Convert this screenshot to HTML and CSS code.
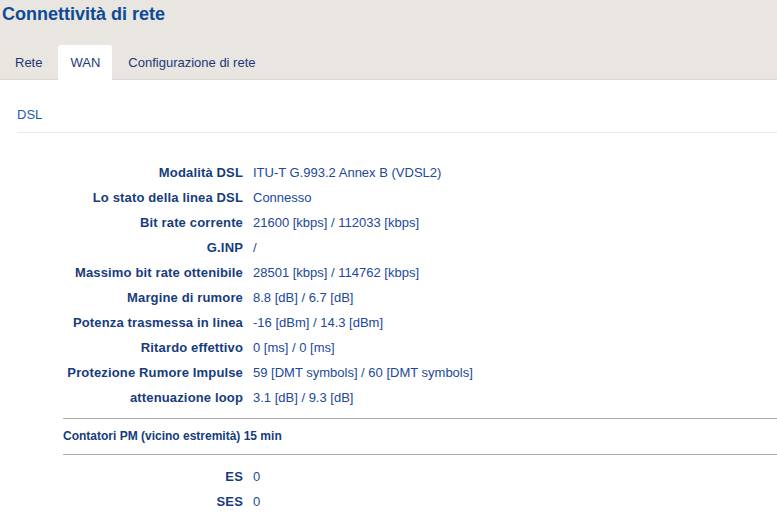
FILE: index.html
```html
<!DOCTYPE html>
<html lang="it">
<head>
    <meta charset="UTF-8">
    <title>Connettività di rete</title>
    <link rel="stylesheet" href="styles.css">
</head>
<body>
    <div class="header">
        <h1>Connettività di rete</h1>
        <div class="tabs">
            <div class="tab">Rete</div>
            <div class="tab active">WAN</div>
            <div class="tab">Configurazione di rete</div>
        </div>
    </div>

    <div class="content">
        <div class="section-title">DSL</div>

        <div class="rows">
            <div class="row"><span class="label">Modalità DSL</span><span class="value">ITU-T G.993.2 Annex B (VDSL2)</span></div>
            <div class="row"><span class="label">Lo stato della linea DSL</span><span class="value">Connesso</span></div>
            <div class="row"><span class="label">Bit rate corrente</span><span class="value">21600 [kbps] / 112033 [kbps]</span></div>
            <div class="row"><span class="label">G.INP</span><span class="value">/</span></div>
            <div class="row"><span class="label">Massimo bit rate ottenibile</span><span class="value">28501 [kbps] / 114762 [kbps]</span></div>
            <div class="row"><span class="label">Margine di rumore</span><span class="value">8.8 [dB] / 6.7 [dB]</span></div>
            <div class="row"><span class="label">Potenza trasmessa in linea</span><span class="value">-16 [dBm] / 14.3 [dBm]</span></div>
            <div class="row"><span class="label">Ritardo effettivo</span><span class="value">0 [ms] / 0 [ms]</span></div>
            <div class="row"><span class="label">Protezione Rumore Impulse</span><span class="value">59 [DMT symbols] / 60 [DMT symbols]</span></div>
            <div class="row"><span class="label">attenuazione loop</span><span class="value">3.1 [dB] / 9.3 [dB]</span></div>
        </div>

        <div class="subsection">Contatori PM (vicino estremità) 15 min</div>

        <div class="rows">
            <div class="row"><span class="label">ES</span><span class="value">0</span></div>
            <div class="row"><span class="label">SES</span><span class="value">0</span></div>
        </div>
    </div>
</body>
</html>
```

FILE: styles.css
```css
body {
    margin: 0;
    font-family: "Liberation Sans", Arial, sans-serif;
    font-size: 13px;
    background-color: #fff;
}

.header {
    background-color: #e9e5e1;
    border-bottom: 1px solid #dad6d2;
}

h1 {
    margin: 0;
    padding: 3px 0 0 2px;
    font-size: 18px;
    line-height: 22px;
    color: #0d4b95;
}

.tabs {
    display: flex;
    padding-left: 3px;
    margin-top: 20px;
}

.tab {
    padding: 1px 12px 0;
    height: 33px;
    line-height: 34px;
    color: #1d3877;
    margin-right: 4px;
}

.tab.active {
    background-color: #fff;
    border-radius: 3px 3px 0 0;
    margin-bottom: -1px;
    height: 34px;
}

.content {
    padding: 0 0 0 17px;
}

.section-title {
    color: #1b5ea6;
    height: 52px;
    line-height: 69px;
    border-bottom: 1px solid #ebebeb;
    margin-bottom: 27px;
}

.rows {
    display: flex;
    flex-direction: column;
}

.row {
    display: grid;
    grid-template-columns: 226px 1fr;
    gap: 10px;
    height: 25px;
    line-height: 25px;
}

.label {
    text-align: right;
    font-weight: bold;
    letter-spacing: 0.15px;
    color: #163c7d;
}

.value {
    color: #21489b;
}

.subsection {
    margin: 8px 0 9px 46px;
    border-top: 1px solid #aaa;
    border-bottom: 1px solid #aaa;
    height: 35px;
    line-height: 35px;
    font-size: 12px;
    font-weight: bold;
    color: #163c7d;
}
```
